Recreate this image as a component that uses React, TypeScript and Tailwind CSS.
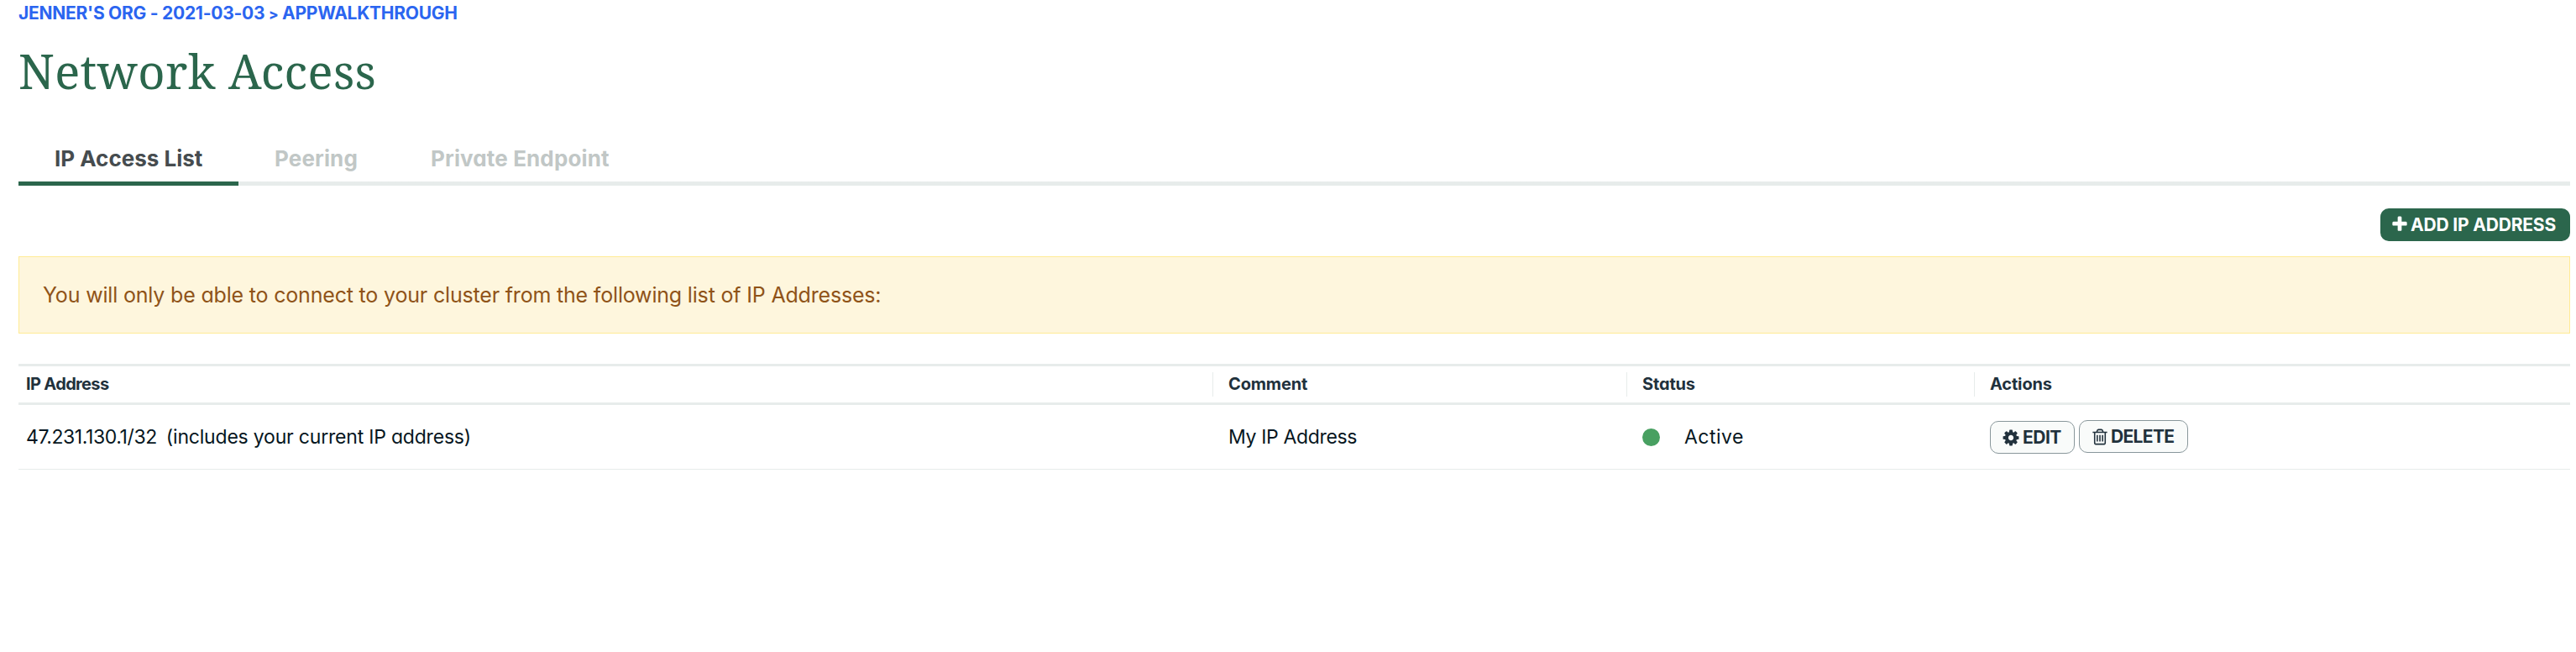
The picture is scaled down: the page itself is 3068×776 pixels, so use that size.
import type { ReactNode } from "react";

const PLUS =
  "M1600 736v192q0 40-28 68t-68 28h-416v416q0 40-28 68t-68 28h-192q-40 0-68-28t-28-68v-416h-416q-40 0-68-28t-28-68v-192q0-40 28-68t68-28h416v-416q0-40 28-68t68-28h192q40 0 68 28t28 68v416h416q40 0 68 28t28 68z";
const COG =
  "M1152 896q0-106-75-181t-181-75-181 75-75 181 75 181 181 75 181-75 75-181zm512-109v222q0 12-8 23t-20 13l-185 28q-19 54-39 91 35 50 107 138 10 12 10 25t-9 23q-27 37-99 108t-94 71q-12 0-26-9l-138-108q-44 23-91 38-16 136-29 186-7 28-36 28h-222q-14 0-24.5-8.5t-11.5-21.5l-28-184q-49-16-90-37l-141 107q-10 9-25 9-14 0-25-11-126-114-165-168-7-10-7-23 0-12 8-23 15-21 51-66.5t54-70.5q-27-50-41-99l-183-27q-13-2-21-12.5t-8-23.5v-222q0-12 8-23t19-13l186-28q14-46 39-92-40-57-107-138-10-12-10-24 0-10 9-23 26-36 98.5-107.5t94.5-71.5q13 0 26 10l138 107q44-23 91-38 16-136 29-186 7-28 36-28h222q14 0 24.5 8.5t11.5 21.5l28 184q49 16 90 37l142-107q9-9 24-9 13 0 25 10 129 119 165 170 7 8 7 22 0 12-8 23-15 21-51 66.5t-54 70.5q26 50 41 98l183 28q13 2 21 12.5t8 23.5z";
const TRASH =
  "M704 736v576q0 14-9 23t-23 9h-64q-14 0-23-9t-9-23v-576q0-14 9-23t23-9h64q14 0 23 9t9 23zm256 0v576q0 14-9 23t-23 9h-64q-14 0-23-9t-9-23v-576q0-14 9-23t23-9h64q14 0 23 9t9 23zm256 0v576q0 14-9 23t-23 9h-64q-14 0-23-9t-9-23v-576q0-14 9-23t23-9h64q14 0 23 9t9 23zm128 724v-948h-896v948q0 22 7 40.5t14.5 27 10.5 8.5h832q3 0 10.5-8.5t14.5-27 7-40.5zm-672-1076h448l-48-117q-7-9-17-11h-317q-10 2-17 11zm928 32v64q0 14-9 23t-23 9h-96v948q0 83-47 143.5t-113 60.5h-832q-66 0-113-58.5t-47-141.5v-952h-96q-14 0-23-9t-9-23v-64q0-14 9-23t23-9h309l70-167q15-37 54-63t79-26h320q40 0 79 26t54 63l70 167h309q14 0 23 9t9 23z";

function Icon({ path, className = "" }: { path: string; className?: string }) {
  return (
    <svg viewBox="0 0 1792 1792" className={`size-[22px] shrink-0 fill-current ${className}`} aria-hidden="true">
      <path d={path} />
    </svg>
  );
}

function Tab({ children, active }: { children: ReactNode; active?: boolean }) {
  return (
    <button
      className={`flex h-[60px] items-center border-b-[5px] text-[26px] font-bold whitespace-nowrap ${
        active
          ? "w-[262px] border-[#2b664c] pl-[43px] tracking-[0px] text-[#464c4f]"
          : "border-transparent pl-[43px] tracking-[0.13px] text-[#c1c7c6]"
      }`}
    >
      {children}
    </button>
  );
}

export default function App() {
  return (
    <main className="flex h-[776px] flex-col bg-white pr-[7px] pl-[22px] font-['Inter','Open_Sans',sans-serif] text-[#061621] [font-feature-settings:'cv11']">
      <nav className="h-[31px] text-[21px] leading-[31px] font-bold tracking-[-0.26px] whitespace-nowrap text-[#2b65f0]">
        JENNER'S ORG - 2021-03-03 <span className="text-[17px] font-extrabold">&gt;</span> APPWALKTHROUGH
      </nav>
      <h1 className="h-[108px] font-['Noto_Serif','Liberation_Serif',serif] text-[56px] leading-[106px] tracking-[0.4px] text-[#2b664c]">
        Network Access
      </h1>

      <div className="mt-[22px] flex h-[60px] bg-linear-to-t from-[#e7eceb] from-[5px] to-transparent to-[5px]">
        <Tab active>IP Access List</Tab>
        <div className="flex w-[186px]"><Tab>Peering</Tab></div>
        <Tab>Private Endpoint</Tab>
      </div>

      <div className="mt-[27px] flex justify-end">
        <button className="flex h-[39px] w-[226px] items-center rounded-[10px] bg-[#2b664c] pl-[12px] text-[21px] font-bold whitespace-nowrap text-white">
          <Icon path={PLUS} className="mr-[2px] -mt-[2px]" />
          <span className="tracking-[-0.18px]">ADD IP ADDRESS</span>
        </button>
      </div>

      <div className="mt-[18px] flex h-[92px] items-center border border-[#ffeb96] bg-[#fef6dd] pt-[2px] pl-[28px] text-[25px] tracking-[-0.18px] text-[#8f5318]">
        You will only be able to connect to your cluster from the following list of IP Addresses:
      </div>

      <section className="mt-[36px]">
        <div className="grid h-[49px] grid-cols-[1422px_493px_414px_1fr] items-center border-y-[3px] border-[#e7eceb] text-[20px] leading-[29px] font-bold tracking-[-0.15px] text-[#21313c]">
          <div className="pl-[9px] tracking-[-0.65px]">IP Address</div>
          <div className="border-l border-[#e7eceb] pl-[18px]">Comment</div>
          <div className="border-l border-[#e7eceb] pl-[18px]">Status</div>
          <div className="border-l border-[#e7eceb] pl-[18px]">Actions</div>
        </div>
        <div className="grid h-[77px] grid-cols-[1422px_493px_414px_1fr] items-center border-b border-[#e7eceb] text-[23px]">
          <div className="flex gap-[11px] pl-[9px]">
            <span className="tracking-[-0.4px]">47.231.130.1/32</span>
            <span className="tracking-[-0.2px]">(includes your current IP address)</span>
          </div>
          <div className="pl-[19px] tracking-[-0.35px]">My IP Address</div>
          <div className="flex items-center gap-[29px] pl-[19px]">
            <span className="size-[21px] rounded-full bg-[#48a061]" />
            <span className="tracking-[0.5px]">Active</span>
          </div>
          <div className="flex items-start gap-[5px] pl-[19px] text-[21px] font-bold text-[#21313c]">
            <button className="mt-px flex h-[39px] w-[101px] items-center rounded-[10px] border border-[#89979b] bg-[#f9fbfa] pl-[13px]">
              <Icon path={COG} className="mr-[3px]" />
              <span className="tracking-[-0.5px]">EDIT</span>
            </button>
            <button className="flex h-[39px] w-[130px] items-center rounded-[10px] border border-[#89979b] bg-[#f9fbfa] pl-[13px]">
              <Icon path={TRASH} className="mr-[2px]" />
              <span className="tracking-[-0.65px]">DELETE</span>
            </button>
          </div>
        </div>
      </section>
    </main>
  );
}
